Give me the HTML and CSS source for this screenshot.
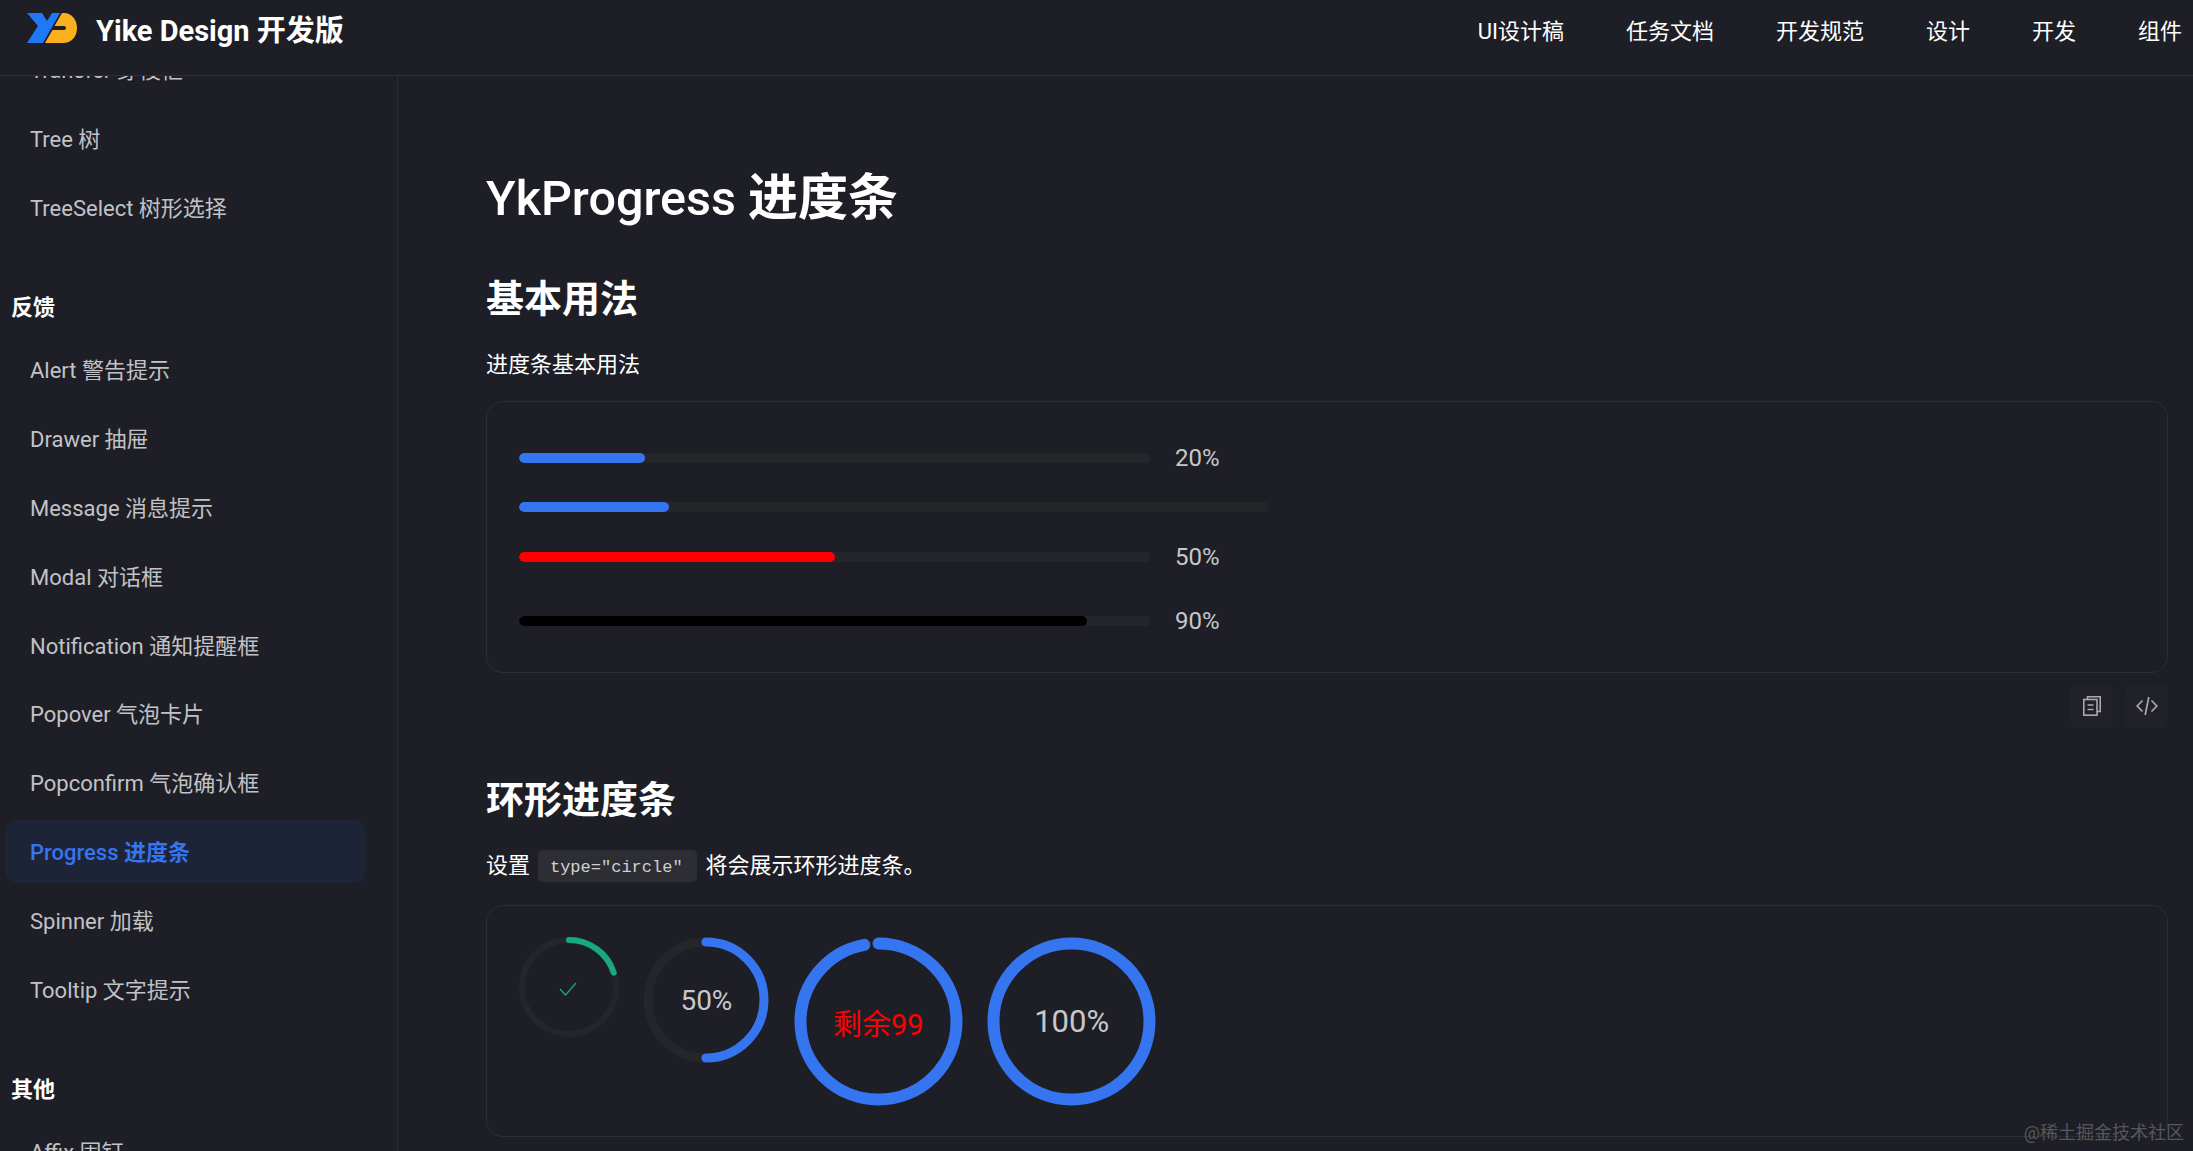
FILE: index.html
```html
<!DOCTYPE html>
<html lang="zh-CN">
<head>
    <meta charset="UTF-8">
    <title>YkProgress 进度条 | Yike Design</title>
    <link rel="stylesheet" href="styles.css">
</head>
<body>
    <header class="topbar">
        <div class="brand">
            <svg class="brand-logo" viewBox="0 0 50 30">
                <polygon fill="#1f78f5" points="0,0 15,0 20,8 25,0 33,0 16,30 0,30 11,13"/>
                <path fill="#fbb01e" d="M35 0H37C45 0 50 7 50 15C50 24 44 30 36 30H18L25.5 17H37A2 2 0 0 0 37 13H27.5Z"/>
            </svg>
            <span class="brand-name">Yike Design 开发版</span>
        </div>
        <nav class="topnav">
            <a>UI设计稿</a>
            <a>任务文档</a>
            <a>开发规范</a>
            <a>设计</a>
            <a>开发</a>
            <a>组件</a>
        </nav>
    </header>

    <div class="page">
        <aside class="sidebar">
            <div class="sidebar-inner">
                <div class="menu-group">
                    <a class="menu-item">Transfer 穿梭框</a>
                    <a class="menu-item">Tree 树</a>
                    <a class="menu-item">TreeSelect 树形选择</a>
                </div>
                <div class="menu-group">
                    <div class="menu-title">反馈</div>
                    <a class="menu-item">Alert 警告提示</a>
                    <a class="menu-item">Drawer 抽屉</a>
                    <a class="menu-item">Message 消息提示</a>
                    <a class="menu-item">Modal 对话框</a>
                    <a class="menu-item">Notification 通知提醒框</a>
                    <a class="menu-item">Popover 气泡卡片</a>
                    <a class="menu-item">Popconfirm 气泡确认框</a>
                    <a class="menu-item active">Progress <b>进度条</b></a>
                    <a class="menu-item">Spinner 加载</a>
                    <a class="menu-item">Tooltip 文字提示</a>
                </div>
                <div class="menu-group">
                    <div class="menu-title">其他</div>
                    <a class="menu-item">Affix 固钉</a>
                </div>
            </div>
        </aside>

        <main class="content">
            <h1>YkProgress <b>进度条</b></h1>

            <h2>基本用法</h2>
            <p class="note">进度条基本用法</p>
            <section class="demo demo-bars">
                <div class="bar-row">
                    <div class="track"><div class="fill" style="width: 20%"></div></div>
                    <span class="bar-label">20%</span>
                </div>
                <div class="bar-row">
                    <div class="track track-wide"><div class="fill" style="width: 20%"></div></div>
                </div>
                <div class="bar-row bar-row-spaced">
                    <div class="track"><div class="fill fill-red" style="width: 50%"></div></div>
                    <span class="bar-label">50%</span>
                </div>
                <div class="bar-row">
                    <div class="track"><div class="fill fill-black" style="width: 90%"></div></div>
                    <span class="bar-label">90%</span>
                </div>
            </section>
            <div class="demo-actions">
                <button class="icon-btn" aria-label="copy">
                    <svg width="18" height="20" viewBox="0 0 18 20" fill="none" stroke="#a9a9ad" stroke-width="1.6">
                        <path d="M4.5 3.5V.8H17.2V15.5H14"/>
                        <rect x=".8" y="3.5" width="13.2" height="15.7"/>
                        <path d="M4.5 9H10.5M4.5 13.5H10.5"/>
                    </svg>
                </button>
                <button class="icon-btn" aria-label="code">
                    <svg width="22" height="20" viewBox="0 0 22 20" fill="none" stroke="#a9a9ad" stroke-width="1.7">
                        <path d="M6.5 4.5L1.2 10L6.5 15.5M15.5 4.5L20.8 10L15.5 15.5M12.8 1L9.2 19"/>
                    </svg>
                </button>
            </div>

            <h2>环形进度条</h2>
            <p class="note note-code">设置 <code>type="circle"</code> 将会展示环形进度条。</p>
            <section class="demo demo-circles">
                <div class="ring">
                    <svg width="100" height="100" viewBox="0 0 100 100" fill="none" stroke-width="6">
                        <circle cx="50" cy="50" r="47" stroke="#25262a"/>
                        <circle cx="50" cy="50" r="47" stroke="#18a97c" stroke-linecap="round" stroke-dasharray="59 296" transform="rotate(-90 50 50)"/>
                    </svg>
                    <svg class="ring-check" width="18" height="14" viewBox="0 0 18 14" fill="none" stroke="#18a97c" stroke-width="1.3">
                        <path d="M1 7L6.5 13L17 1"/>
                    </svg>
                </div>
                <div class="ring ring-md">
                    <svg width="126" height="126" viewBox="0 0 126 126" fill="none" stroke-width="9">
                        <circle cx="63" cy="63" r="58" stroke="#25262a"/>
                        <circle cx="63" cy="63" r="58" stroke="#3575f0" stroke-linecap="round" stroke-dasharray="182 365" transform="rotate(-90 63 63)"/>
                    </svg>
                    <span class="ring-text">50%</span>
                </div>
                <div class="ring ring-lg">
                    <svg width="169" height="169" viewBox="0 0 169 169" fill="none" stroke-width="12">
                        <circle cx="84.5" cy="84.5" r="78" stroke="#3575f0" stroke-linecap="round" stroke-dasharray="475 490" transform="rotate(-90 84.5 84.5)"/>
                    </svg>
                    <span class="ring-text ring-text-red">剩余99</span>
                </div>
                <div class="ring ring-lg">
                    <svg width="169" height="169" viewBox="0 0 169 169" fill="none" stroke-width="12">
                        <circle cx="84.5" cy="84.5" r="78" stroke="#3575f0"/>
                    </svg>
                    <span class="ring-text">100%</span>
                </div>
            </section>
        </main>
    </div>

    <div class="watermark">@稀土掘金技术社区</div>
</body>
</html>
```

FILE: styles.css
```css
* {
    margin: 0;
    padding: 0;
    box-sizing: border-box;
}

html, body {
    height: 100%;
    overflow: hidden;
}

body {
    font-family: Roboto, "Noto Sans CJK SC", sans-serif;
    font-size: 22px;
    background-color: #1e1f26;
    color: #fff;
}

.topbar {
    height: 76px;
    border-bottom: 1px solid #2d2e33;
    display: flex;
    justify-content: space-between;
    align-items: flex-start;
    padding: 13px 11px 0 27px;
}

.brand {
    display: flex;
    align-items: center;
    gap: 19px;
    height: 30px;
}

.brand-logo {
    width: 50px;
    height: 30px;
}

.brand-name {
    font-size: 29px;
    font-weight: 700;
}

.topnav {
    display: flex;
    gap: 62px;
    height: 32px;
    align-items: center;
}

.page {
    display: flex;
    height: calc(100% - 76px);
}

.sidebar {
    width: 398px;
    flex-shrink: 0;
    border-right: 1px solid #2d2e33;
    overflow: hidden;
}

.sidebar-inner {
    margin-top: -38px;
    padding: 0 31px 0 5px;
}

.menu-group {
    padding-bottom: 31px;
}

.menu-title {
    height: 63px;
    line-height: 65px;
    padding-left: 6px;
    font-weight: 700;
}

.menu-item {
    display: block;
    height: 63px;
    line-height: 65px;
    margin-bottom: 5.8px;
    padding-left: 25px;
    border-radius: 12px;
    color: #c2c2c6;
}

.menu-item.active {
    background-color: #1d2438;
    color: #3575f0;
    font-weight: 500;
}

.content {
    flex: 1;
    padding: 88px 25px 0 88px;
}

h1 {
    font-size: 48.5px;
    line-height: 69px;
    font-weight: 500;
    margin-bottom: 37.6px;
}

h1 b {
    font-size: 50px;
}

h2 {
    font-size: 38px;
    line-height: 56px;
    font-weight: 700;
}

.note {
    line-height: 36px;
    margin-top: 20.7px;
    margin-bottom: 17.4px;
}

.note-code {
    margin-bottom: 21px;
}

code {
    display: inline-block;
    font-family: "Liberation Mono", monospace;
    font-size: 17px;
    height: 32px;
    line-height: 36px;
    margin: 2px 3.5px 0 2.5px;
    padding: 0 14px 0 12px;
    border-radius: 5px;
    background-color: #2d2e33;
    color: #d0d0d3;
    vertical-align: top;
}

.demo {
    border: 1px solid #2d2e33;
    border-radius: 16px;
}

.demo-bars {
    height: 272px;
    padding: 40px 32px 0;
}

.bar-row {
    display: flex;
    align-items: center;
    gap: 25px;
    min-height: 10px;
    margin-bottom: 28.5px;
}

.bar-row-spaced {
    margin-bottom: 32px;
}

.bar-label {
    font-size: 24px;
    line-height: 32px;
    color: #c8c8cb;
}

.track {
    width: 631px;
    height: 10px;
    border-radius: 5px;
    background-color: #25262a;
    overflow: hidden;
}

.track-wide {
    width: 750px;
}

.fill {
    height: 100%;
    border-radius: 5px;
    background-color: #3575f0;
}

.fill-red {
    background-color: #ff0000;
}

.fill-black {
    background-color: #000;
}

.demo-actions {
    display: flex;
    justify-content: flex-end;
    gap: 12px;
    margin-top: 11.5px;
    margin-bottom: 43.6px;
}

.icon-btn {
    width: 43px;
    height: 44px;
    border: none;
    border-radius: 8px;
    background-color: #212228;
    display: flex;
    align-items: center;
    justify-content: center;
}

.demo-circles {
    height: 232px;
    padding: 31px 32px 0;
    display: flex;
    align-items: flex-start;
    gap: 24.4px;
}

.ring {
    display: grid;
    place-items: center;
}

.ring > * {
    grid-area: 1 / 1;
}

.ring-check {
    margin: 3px 2px 0 0;
}

.ring-text {
    font-size: 28px;
    color: #c8c8cb;
}

.ring-lg .ring-text {
    font-size: 31px;
}

.ring-lg .ring-text-red {
    font-size: 29px;
    color: #ff0000;
}

.watermark {
    position: absolute;
    right: 9px;
    bottom: 7px;
    font-size: 18px;
    color: rgba(255, 255, 255, 0.25);
}
```
